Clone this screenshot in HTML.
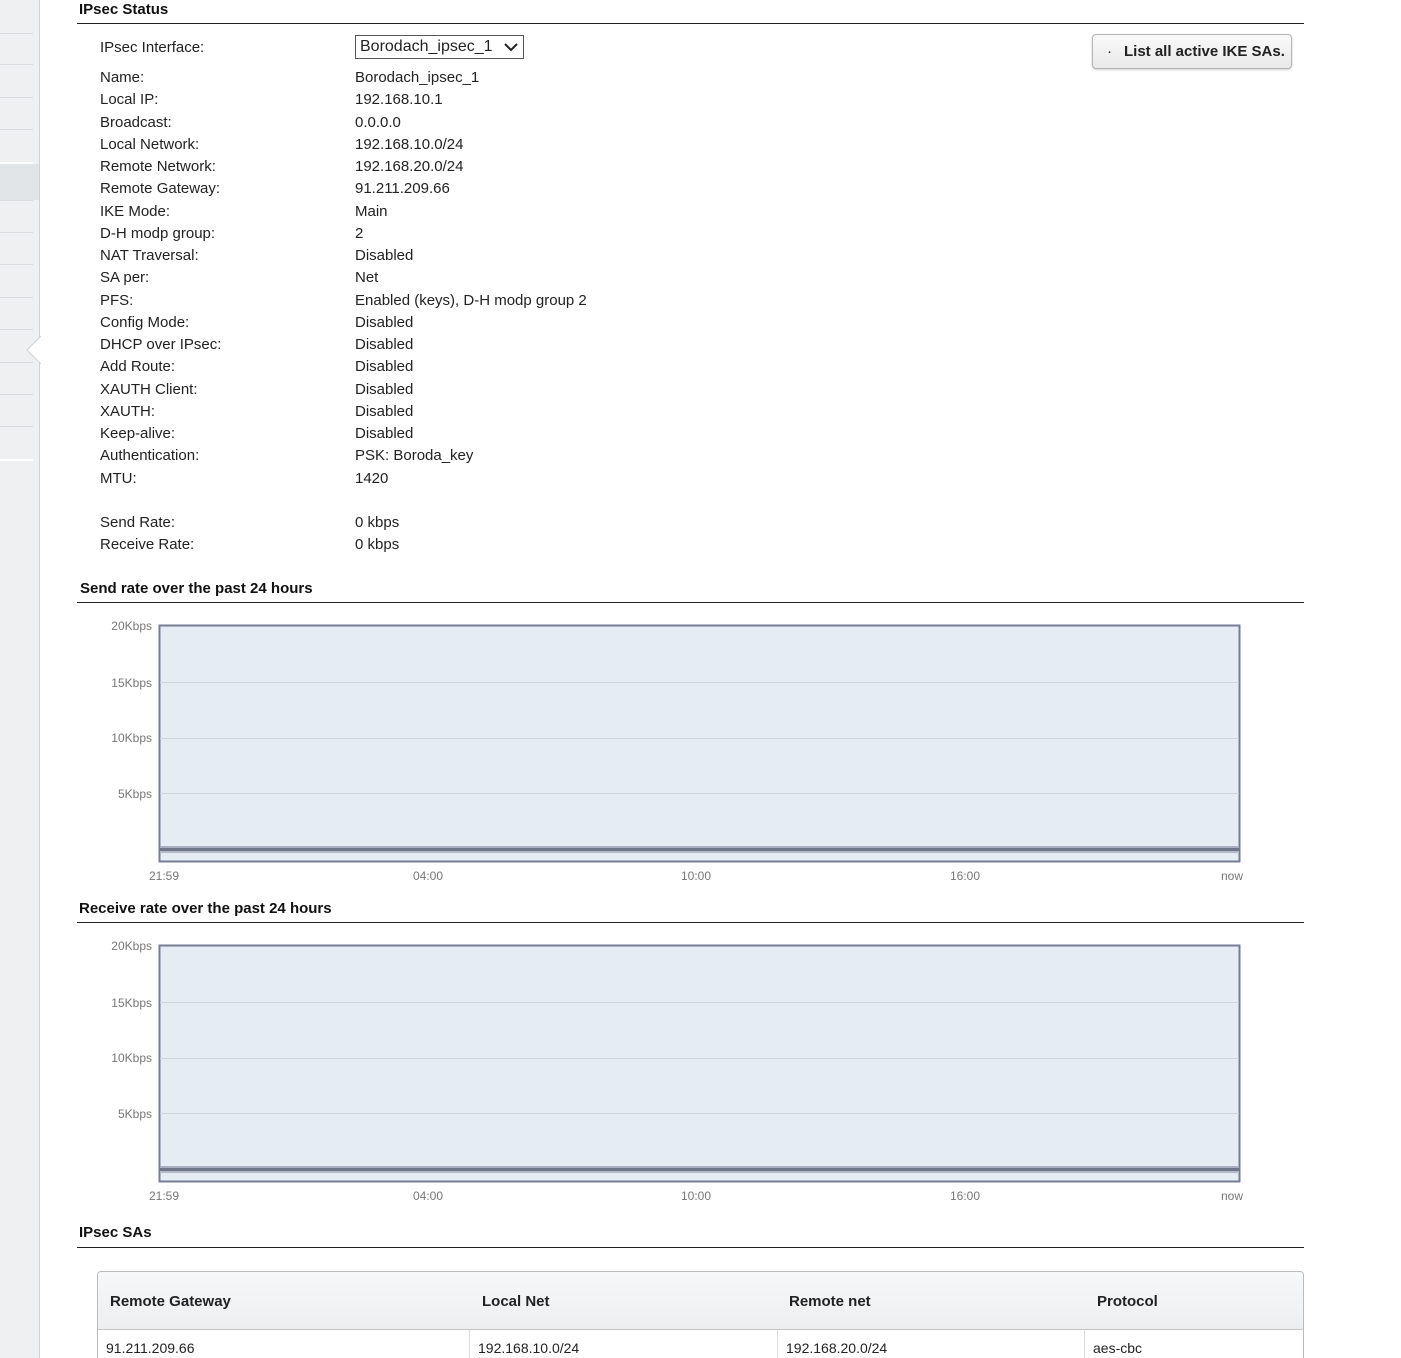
<!DOCTYPE html>
<html><head><meta charset="utf-8"><style>
*{margin:0;padding:0;box-sizing:border-box}
html,body{width:1401px;height:1358px;overflow:hidden}
body{position:relative;background:#fff;font-family:"Liberation Sans",Arial,sans-serif;color:#222}
.a{position:absolute;white-space:nowrap}
.l{font-size:15px;left:100px}
.v{font-size:15px;left:355px}
.h{font-weight:bold;font-size:15px;color:#111}
.rule{position:absolute;left:77px;width:1227px;height:1px;background:#222}
#side{position:absolute;left:0;top:0;width:40px;height:1358px;background:#eef0f2;border-right:1px solid #cfd3d7}
#side i{position:absolute;left:0;width:33px;height:1px;background:#d8dbdf}
.yl{font-size:12px;color:#777;position:absolute;text-align:right;width:60px;left:92px}
.xl{font-size:12px;color:#777;position:absolute}
</style></head><body>
<div id="side">
<i style="top:33px"></i><i style="top:64px"></i><i style="top:97px"></i><i style="top:129px"></i><i style="top:162px;background:#fff;height:2px"></i>
<div style="position:absolute;top:164px;left:0;width:39px;height:36px;background:#e2e5e8"></div>
<i style="top:200px"></i><i style="top:232px"></i><i style="top:264px"></i><i style="top:297px"></i><i style="top:329px"></i><i style="top:362px"></i><i style="top:394px"></i><i style="top:426px"></i><i style="top:459px;background:#fff;height:2px"></i>
<svg style="position:absolute;left:26px;top:336px" width="15" height="28"><path d="M15 0 L1 14 L15 28 Z" fill="#fff" stroke="#cfd3d7"/><rect x="14" y="1" width="2" height="26" fill="#fff"/></svg>
</div>

<div class="a h" style="left:79px;top:1px">IPsec Status</div>
<div class="rule" style="top:23px"></div>

<div class="a l" style="top:39px">IPsec Interface:</div>
<div class="a" style="left:355px;top:35px;width:169px;height:24px;border:1px solid #555;font-size:16px;padding:2px 0 0 4px">Borodach_ipsec_1
<svg style="position:absolute;right:5px;top:6px" width="14" height="10"><path d="M1 2 L7 8 L13 2" fill="none" stroke="#222" stroke-width="2"/></svg></div>

<div class="a" style="left:1092px;top:34px;width:200px;height:35px;border:1px solid #b5b5b5;border-radius:4px;background:linear-gradient(#fafafa,#e9e9e9);box-shadow:0 1px 2px rgba(0,0,0,.2);font-size:15px;font-weight:bold;padding-top:8px"><span style="position:absolute;left:14px;font-weight:normal">·</span><span style="position:absolute;left:31px">List all active IKE SAs.</span></div>

<div class="a l" style="top:69px">Name:</div><div class="a v" style="top:69px">Borodach_ipsec_1</div>
<div class="a l" style="top:91px">Local IP:</div><div class="a v" style="top:91px">192.168.10.1</div>
<div class="a l" style="top:114px">Broadcast:</div><div class="a v" style="top:114px">0.0.0.0</div>
<div class="a l" style="top:136px">Local Network:</div><div class="a v" style="top:136px">192.168.10.0/24</div>
<div class="a l" style="top:158px">Remote Network:</div><div class="a v" style="top:158px">192.168.20.0/24</div>
<div class="a l" style="top:180px">Remote Gateway:</div><div class="a v" style="top:180px">91.211.209.66</div>
<div class="a l" style="top:203px">IKE Mode:</div><div class="a v" style="top:203px">Main</div>
<div class="a l" style="top:225px">D-H modp group:</div><div class="a v" style="top:225px">2</div>
<div class="a l" style="top:247px">NAT Traversal:</div><div class="a v" style="top:247px">Disabled</div>
<div class="a l" style="top:269px">SA per:</div><div class="a v" style="top:269px">Net</div>
<div class="a l" style="top:292px">PFS:</div><div class="a v" style="top:292px">Enabled (keys), D-H modp group 2</div>
<div class="a l" style="top:314px">Config Mode:</div><div class="a v" style="top:314px">Disabled</div>
<div class="a l" style="top:336px">DHCP over IPsec:</div><div class="a v" style="top:336px">Disabled</div>
<div class="a l" style="top:358px">Add Route:</div><div class="a v" style="top:358px">Disabled</div>
<div class="a l" style="top:381px">XAUTH Client:</div><div class="a v" style="top:381px">Disabled</div>
<div class="a l" style="top:403px">XAUTH:</div><div class="a v" style="top:403px">Disabled</div>
<div class="a l" style="top:425px">Keep-alive:</div><div class="a v" style="top:425px">Disabled</div>
<div class="a l" style="top:447px">Authentication:</div><div class="a v" style="top:447px">PSK: Boroda_key</div>
<div class="a l" style="top:470px">MTU:</div><div class="a v" style="top:470px">1420</div>
<div class="a l" style="top:514px">Send Rate:</div><div class="a v" style="top:514px">0 kbps</div>
<div class="a l" style="top:536px">Receive Rate:</div><div class="a v" style="top:536px">0 kbps</div>

<div class="a h" style="left:80px;top:580px">Send rate over the past 24 hours</div>
<div class="rule" style="top:602px"></div>

<svg style="position:absolute;left:0;top:0" width="1401" height="1358">
<g>
<rect x="159.5" y="625.5" width="1080" height="236" fill="#e6ecf4" stroke="#747d92" stroke-width="2"/>
<line x1="160" x2="1239" y1="682.5" y2="682.5" stroke="#cfd6df"/>
<line x1="160" x2="1239" y1="738.5" y2="738.5" stroke="#cfd6df"/>
<line x1="160" x2="1239" y1="793.5" y2="793.5" stroke="#cfd6df"/>
<rect x="160" y="846" width="1079" height="2" fill="#a9afbf"/>
<rect x="160" y="848" width="1079" height="3" fill="#6f7689"/>
<rect x="160" y="851" width="1079" height="2" fill="#b4bac7"/>
</g>
<g transform="translate(0,320)">
<rect x="159.5" y="625.5" width="1080" height="236" fill="#e6ecf4" stroke="#747d92" stroke-width="2"/>
<line x1="160" x2="1239" y1="682.5" y2="682.5" stroke="#cfd6df"/>
<line x1="160" x2="1239" y1="738.5" y2="738.5" stroke="#cfd6df"/>
<line x1="160" x2="1239" y1="793.5" y2="793.5" stroke="#cfd6df"/>
<rect x="160" y="846" width="1079" height="2" fill="#a9afbf"/>
<rect x="160" y="848" width="1079" height="3" fill="#6f7689"/>
<rect x="160" y="851" width="1079" height="2" fill="#b4bac7"/>
</g>
</svg>
<div class="yl" style="top:619px">20Kbps</div>
<div class="yl" style="top:676px">15Kbps</div>
<div class="yl" style="top:731px">10Kbps</div>
<div class="yl" style="top:787px">5Kbps</div>
<div class="xl" style="left:149px;top:869px">21:59</div>
<div class="xl" style="left:413px;top:869px">04:00</div>
<div class="xl" style="left:681px;top:869px">10:00</div>
<div class="xl" style="left:950px;top:869px">16:00</div>
<div class="xl" style="left:1221px;top:869px">now</div>

<div class="a h" style="left:79px;top:900px">Receive rate over the past 24 hours</div>
<div class="rule" style="top:922px"></div>
<div class="yl" style="top:939px">20Kbps</div>
<div class="yl" style="top:996px">15Kbps</div>
<div class="yl" style="top:1051px">10Kbps</div>
<div class="yl" style="top:1107px">5Kbps</div>
<div class="xl" style="left:149px;top:1189px">21:59</div>
<div class="xl" style="left:413px;top:1189px">04:00</div>
<div class="xl" style="left:681px;top:1189px">10:00</div>
<div class="xl" style="left:950px;top:1189px">16:00</div>
<div class="xl" style="left:1221px;top:1189px">now</div>

<div class="a h" style="left:79px;top:1224px">IPsec SAs</div>
<div class="rule" style="top:1247px"></div>

<div style="position:absolute;left:97px;top:1271px;width:1207px;height:87px;border:1px solid #bbb;border-bottom:none;border-radius:4px 4px 0 0;overflow:hidden">
<div style="height:58px;background:linear-gradient(#f7f8f9,#eceef0);border-bottom:1px solid #c4c4c4;position:relative;font-size:15px;font-weight:bold;color:#222">
<span class="a" style="left:12px;top:21px">Remote Gateway</span>
<span class="a" style="left:384px;top:21px">Local Net</span>
<span class="a" style="left:691px;top:21px">Remote net</span>
<span class="a" style="left:999px;top:21px">Protocol</span>
</div>
<div style="position:relative;font-size:14px">
<span class="a" style="left:8px;top:10px">91.211.209.66</span>
<span style="position:absolute;left:371px;top:0;width:1px;height:60px;background:#ddd"></span>
<span class="a" style="left:380px;top:10px">192.168.10.0/24</span>
<span style="position:absolute;left:679px;top:0;width:1px;height:60px;background:#ddd"></span>
<span class="a" style="left:688px;top:10px">192.168.20.0/24</span>
<span style="position:absolute;left:986px;top:0;width:1px;height:60px;background:#ddd"></span>
<span class="a" style="left:995px;top:10px">aes-cbc</span>
</div>
</div>
</body></html>
